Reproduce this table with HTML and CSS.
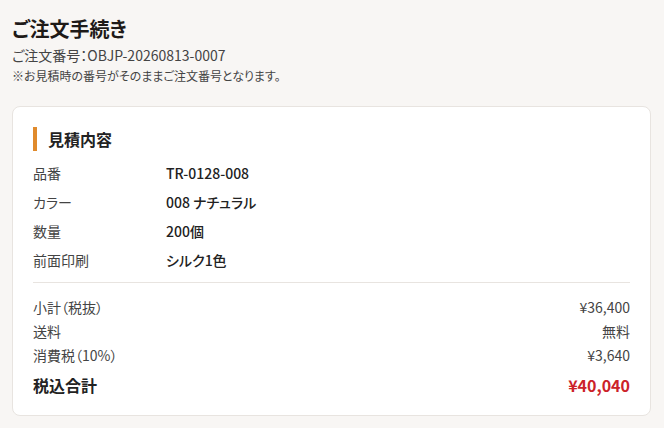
FILE: index.html
```html
<!DOCTYPE html>
<html lang="ja">
<head>
  <meta charset="UTF-8">
  <meta name="viewport" content="width=device-width, initial-scale=1.0">
  <title>ご注文手続き</title>
  <link rel="stylesheet" href="styles.css">
</head>
<body>
  <div class="container">
    <!-- ヘッダー -->
    <div class="page-head">
      <h1>ご注文手続き</h1>
      <p class="order-no">ご注文番号：OBJP-20260813-0007</p>
      <p class="note">※お見積時の番号がそのままご注文番号となります。</p>
    </div>

    <!-- 見積内容 -->
    <div class="card">
      <h2 class="card-title">見積内容</h2>
      <dl class="spec">
        <div class="spec-row"><dt>品番</dt><dd>TR-0128-008</dd></div>
        <div class="spec-row"><dt>カラー</dt><dd>008 ナチュラル</dd></div>
        <div class="spec-row"><dt>数量</dt><dd>200個</dd></div>
        <div class="spec-row"><dt>前面印刷</dt><dd>シルク1色</dd></div>
      </dl>

      <div class="summary">
        <div class="sum-row"><span>小計（税抜）</span><span>¥36,400</span></div>
        <div class="sum-row"><span>送料</span><span>無料</span></div>
        <div class="sum-row"><span>消費税（10%）</span><span>¥3,640</span></div>
        <div class="sum-row total"><span>税込合計</span><span class="price">¥40,040</span></div>
      </div>
    </div>
  </div>
</body>
</html>
```

FILE: styles.css
```css
:root {
  --bg:      #f8f6f4;
  --border:  #e8e4e0;
  --accent:  #e08a2c;
  --red:     #cc2229;
  --text:    #222;
  --sub:     #444;
}
* { box-sizing: border-box; }
body {
  font-family: "Noto Sans CJK JP", "Noto Sans", sans-serif;
  font-feature-settings: "palt";
  background: var(--bg);
  color: var(--text);
  margin: 0;
  padding: 0;
}
.container {
  padding: 16px 13px 12px 12px;
}
/* ヘッダー */
.page-head h1 {
  margin: 0;
  font-size: 20px;
  line-height: 26px;
  font-weight: 700;
  color: #1e1a18;
}
.order-no {
  margin: 3px 0 0;
  font-size: 14px;
  line-height: 20px;
  color: var(--sub);
}
.note {
  margin: 3px 0 0;
  font-size: 12px;
  line-height: 16px;
  color: var(--sub);
}
/* カード */
.card {
  background: #fff;
  border: 1px solid var(--border);
  border-radius: 8px;
  padding: 20px;
  margin-top: 22px;
}
.card-title {
  margin: 0;
  height: 24px;
  line-height: 24px;
  font-size: 16px;
  font-weight: 700;
  border-left: 4px solid var(--accent);
  padding-left: 11px;
}
/* 明細 */
.spec {
  margin: 8px 0 0;
  padding-bottom: 7px;
  border-bottom: 1px solid var(--border);
}
.spec-row {
  display: grid;
  grid-template-columns: 133px 1fr;
  line-height: 29px;
  font-size: 14px;
}
.spec-row dt {
  color: var(--sub);
}
.spec-row dd {
  margin: 0;
  font-weight: 500;
  color: var(--text);
}
/* 合計 */
.summary {
  padding-top: 12px;
}
.sum-row {
  display: flex;
  justify-content: space-between;
  line-height: 24px;
  font-size: 14px;
  color: var(--sub);
}
.sum-row.total {
  margin-top: 8px;
  line-height: 20px;
  font-size: 16px;
  font-weight: 700;
  color: var(--text);
}
.sum-row .price {
  color: var(--red);
}
```
